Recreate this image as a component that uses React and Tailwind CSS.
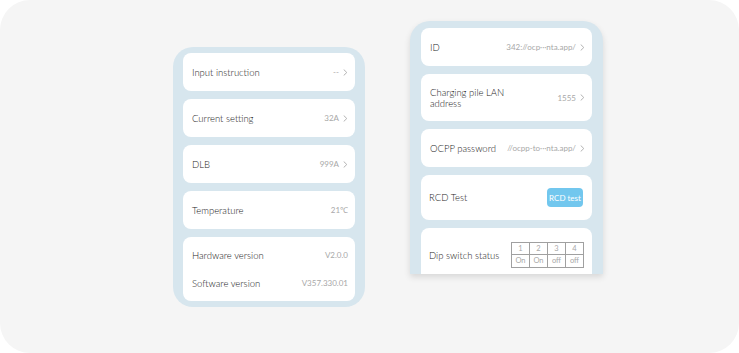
import React from 'react';

const font = { fontFamily: 'Lato, "Noto Sans", sans-serif' };

const Chevron = () => (
    <svg width="5" height="7" viewBox="0 0 5 7" className="ml-[4px] shrink-0">
        <path d="M1 0.8 L3.8 3.5 L1 6.2" fill="none" stroke="#aaaaaa" strokeWidth="0.9" strokeLinecap="round" strokeLinejoin="round" />
    </svg>
);

const label = 'text-[9.5px] font-light text-[#1c1c1c] leading-[11px]';
const val = 'text-[8px] text-[#a8a8a8]';

const Row = ({ text, value, arrow = true, className = 'h-[38px]' }) => (
    <div className={`shrink-0 flex items-center justify-between bg-white rounded-[8px] pl-[9px] pr-[7px] ${className}`}>
        <span className={`${label} max-w-[80px]`}>{text}</span>
        <span className={`flex items-center ${val}`}>
            {value}
            {arrow && <Chevron />}
        </span>
    </div>
);

const DipTable = () => (
    <div className="grid grid-cols-4 border-l border-t border-[#a0a0a0] text-[7.5px] text-[#a8a8a8] leading-none">
        {['1', '2', '3', '4'].map((n) => (
            <div key={n} className="w-[18px] h-[12px] flex items-center justify-center border-r border-b border-[#a0a0a0]">{n}</div>
        ))}
        {['On', 'On', 'off', 'off'].map((n, i) => (
            <div key={i} className="w-[18px] h-[13px] flex items-center justify-center border-r border-b border-[#a0a0a0]">{n}</div>
        ))}
    </div>
);

export default function App() {
    return (
        <div className="w-[739px] h-[353px] bg-white" style={font}>
            <div className="w-full h-full rounded-[30px] bg-[#f5f5f5] flex items-start pl-[173px]">
                <div className="mt-[47px] w-[192px] rounded-[20px] bg-[#d7e6ee] px-[10px] pt-[6px] pb-[6px] flex flex-col gap-[8px]">
                    <Row text="Input instruction" value="--" />
                    <Row text="Current setting" value="32A" />
                    <Row text="DLB" value="999A" />
                    <Row text="Temperature" value="21℃" arrow={false} />
                    <div className="bg-white rounded-[8px] pl-[9px] pr-[7px] py-[4px] flex flex-col">
                        <div className="h-[28px] flex items-center justify-between">
                            <span className={label}>Hardware version</span>
                            <span className={val}>V2.0.0</span>
                        </div>
                        <div className="h-[28px] flex items-center justify-between">
                            <span className={label}>Software version</span>
                            <span className={val}>V357.330.01</span>
                        </div>
                    </div>
                </div>
                <div className="ml-[45px] mt-[21px] w-[193px] h-[253px] overflow-hidden rounded-t-[20px] bg-[#d7e6ee] px-[11px] pt-[7px] flex flex-col gap-[8px] shadow-[0_3px_6px_rgba(0,0,0,0.12)]">
                    <Row text="ID" value="342://ocp···nta.app/" />
                    <Row text="Charging pile LAN address" value="1555" className="h-[47px]" />
                    <Row text="OCPP password" value="//ocpp-to···nta.app/" />
                    <div className="h-[45px] shrink-0 flex items-center justify-between bg-white rounded-[8px] pl-[8px] pr-[9px]">
                        <span className={label}>RCD Test</span>
                        <button className="w-[36px] h-[19px] rounded-[4px] bg-[#72c7ee] text-white text-[8px] flex items-center justify-center">RCD test</button>
                    </div>
                    <div className="h-[54px] shrink-0 flex items-center justify-between bg-white rounded-[8px] pl-[8px] pr-[8px]">
                        <span className={label}>Dip switch status</span>
                        <DipTable />
                    </div>
                </div>
            </div>
        </div>
    );
}
